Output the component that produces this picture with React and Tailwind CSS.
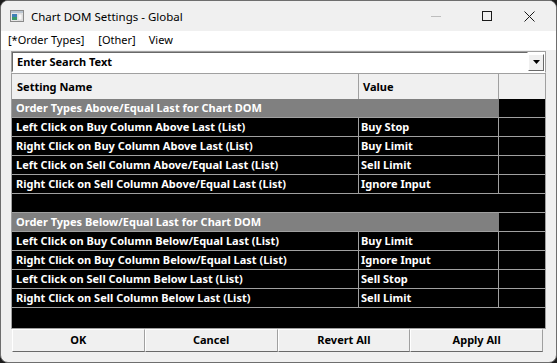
import React from 'react';

const font = { fontFamily: '"Noto Sans", "Open Sans", sans-serif' };

const groups = [
  {
    title: 'Order Types Above/Equal Last for Chart DOM',
    rows: [
      ['Left Click on Buy Column Above Last (List)', 'Buy Stop'],
      ['Right Click on Buy Column Above Last (List)', 'Buy Limit'],
      ['Left Click on Sell Column Above/Equal Last (List)', 'Sell Limit'],
      ['Right Click on Sell Column Above/Equal Last (List)', 'Ignore Input'],
    ],
  },
  {
    title: 'Order Types Below/Equal Last for Chart DOM',
    rows: [
      ['Left Click on Buy Column Below/Equal Last (List)', 'Buy Limit'],
      ['Right Click on Buy Column Below/Equal Last (List)', 'Ignore Input'],
      ['Left Click on Sell Column Below Last (List)', 'Sell Stop'],
      ['Right Click on Sell Column Below Last (List)', 'Sell Limit'],
    ],
  },
];

const AppIcon = () => (
  <svg width="14" height="12" viewBox="0 0 14 12">
    <rect x="0.5" y="0.5" width="13" height="11" fill="#e8e8e8" stroke="#8a8a8a" />
    <rect x="1" y="1" width="12" height="2" fill="#b9c4d0" />
    <rect x="2" y="4" width="5" height="6" fill="#3f7fb8" />
    <rect x="2" y="7" width="5" height="3" fill="#3a9a6a" />
    <rect x="8" y="4" width="4" height="6" fill="#f7f7f7" stroke="#c0c0c0" strokeWidth="0.5" />
  </svg>
);

const GroupRows = ({ group, last }) => (
  <>
    <div className="flex h-[19px] border-b border-[#a0a0a0]">
      <div className="w-[487px] bg-[#808080] pl-[4px] leading-[18px] text-white">{group.title}</div>
      <div className="flex-1 bg-black" />
    </div>
    {group.rows.map(([name, value]) => (
      <div key={name} className="flex h-[19px] border-b border-[#a0a0a0] text-white">
        <div className="w-[347px] border-r border-[#a0a0a0] pl-[4px] leading-[18px] whitespace-nowrap">{name}</div>
        <div className="w-[140px] border-r border-[#a0a0a0] pl-[2px] leading-[18px]">{value}</div>
        <div className="flex-1" />
      </div>
    ))}
    {!last && <div className="h-[19px] border-b border-[#a0a0a0]" />}
  </>
);

export default function App() {
  return (
    <div className="w-[557px] h-[363px] bg-[#1c1c1c] overflow-hidden" style={font}>
      <div className="h-full flex flex-col rounded-[8px] border border-[#6e6e6e] overflow-hidden bg-[#f0f0f0]">
        {/* title bar */}
        <div className="h-[30px] flex items-center bg-[#f0f0f0] text-[11.5px] text-black">
          <div className="ml-[9px] mr-[7px] flex items-center"><AppIcon /></div>
          <span className="mt-[1px]">Chart DOM Settings - Global</span>
          <div className="ml-auto flex items-center h-full">
            <div className="w-[10px] h-px bg-[#bdbdbd]" />
            <div className="ml-[41px] w-[10px] h-[10px] border border-[#1a1a1a]" />
            <svg className="ml-[32px] mr-[21px]" width="11" height="11" viewBox="0 0 11 11">
              <path d="M0.5 0.5 L10.5 10.5 M10.5 0.5 L0.5 10.5" stroke="#1a1a1a" strokeWidth="1" />
            </svg>
          </div>
        </div>

        {/* menu bar */}
        <div className="h-[19px] bg-white flex items-center text-[11px] text-black pl-[7px]">
          <span>[*Order Types]</span>
          <span className="ml-[14px]">[Other]</span>
          <span className="ml-[13px]">View</span>
        </div>

        {/* content */}
        <div className="flex-1 flex flex-col px-[10px] pt-[1px] pb-[10px]">
          <div className="h-[22px] flex items-center bg-white border border-t-[#a0a0a0] border-l-[#a0a0a0] border-r-[#a0a0a0] border-b-white">
            <div className="flex-1 h-full flex items-center border border-t-[#696969] border-l-[#696969] border-r-transparent border-b-transparent pl-[4px] text-[11px] font-bold text-black">
              Enter Search Text
            </div>
            <div className="w-[16px] h-[17px] mr-[1px] flex items-center justify-center bg-[#f0f0f0] border border-t-white border-l-white border-r-[#696969] border-b-[#696969]">
              <svg width="7" height="4" viewBox="0 0 7 4">
                <path d="M0 0 H7 L3.5 4 Z" fill="#000" />
              </svg>
            </div>
          </div>

          <div className="flex-1 flex flex-col bg-black border border-[#a0a0a0] text-[11px] font-bold">
            <div className="flex h-[25px] bg-[#f0f0f0] text-black">
              <div className="w-[347px] border-r border-[#a0a0a0] pl-[5px] leading-[25px]">Setting Name</div>
              <div className="w-[140px] border-r border-[#a0a0a0] pl-[4px] leading-[25px]">Value</div>
              <div className="flex-1" />
            </div>
            {groups.map((g, i) => (
              <GroupRows key={g.title} group={g} last={i === groups.length - 1} />
            ))}
            <div className="flex-1" />
          </div>

          <div className="grid grid-cols-4 h-[23px] mr-[3px] ml-[1px] text-[11px] font-bold text-black">
            {['OK', 'Cancel', 'Revert All', 'Apply All'].map((b) => (
              <button key={b} className="bg-[#f0f0f0] border border-t-white border-l-white border-r-[#a0a0a0] border-b-[#696969] flex items-center justify-center">
                {b}
              </button>
            ))}
          </div>
        </div>
      </div>
    </div>
  );
}
